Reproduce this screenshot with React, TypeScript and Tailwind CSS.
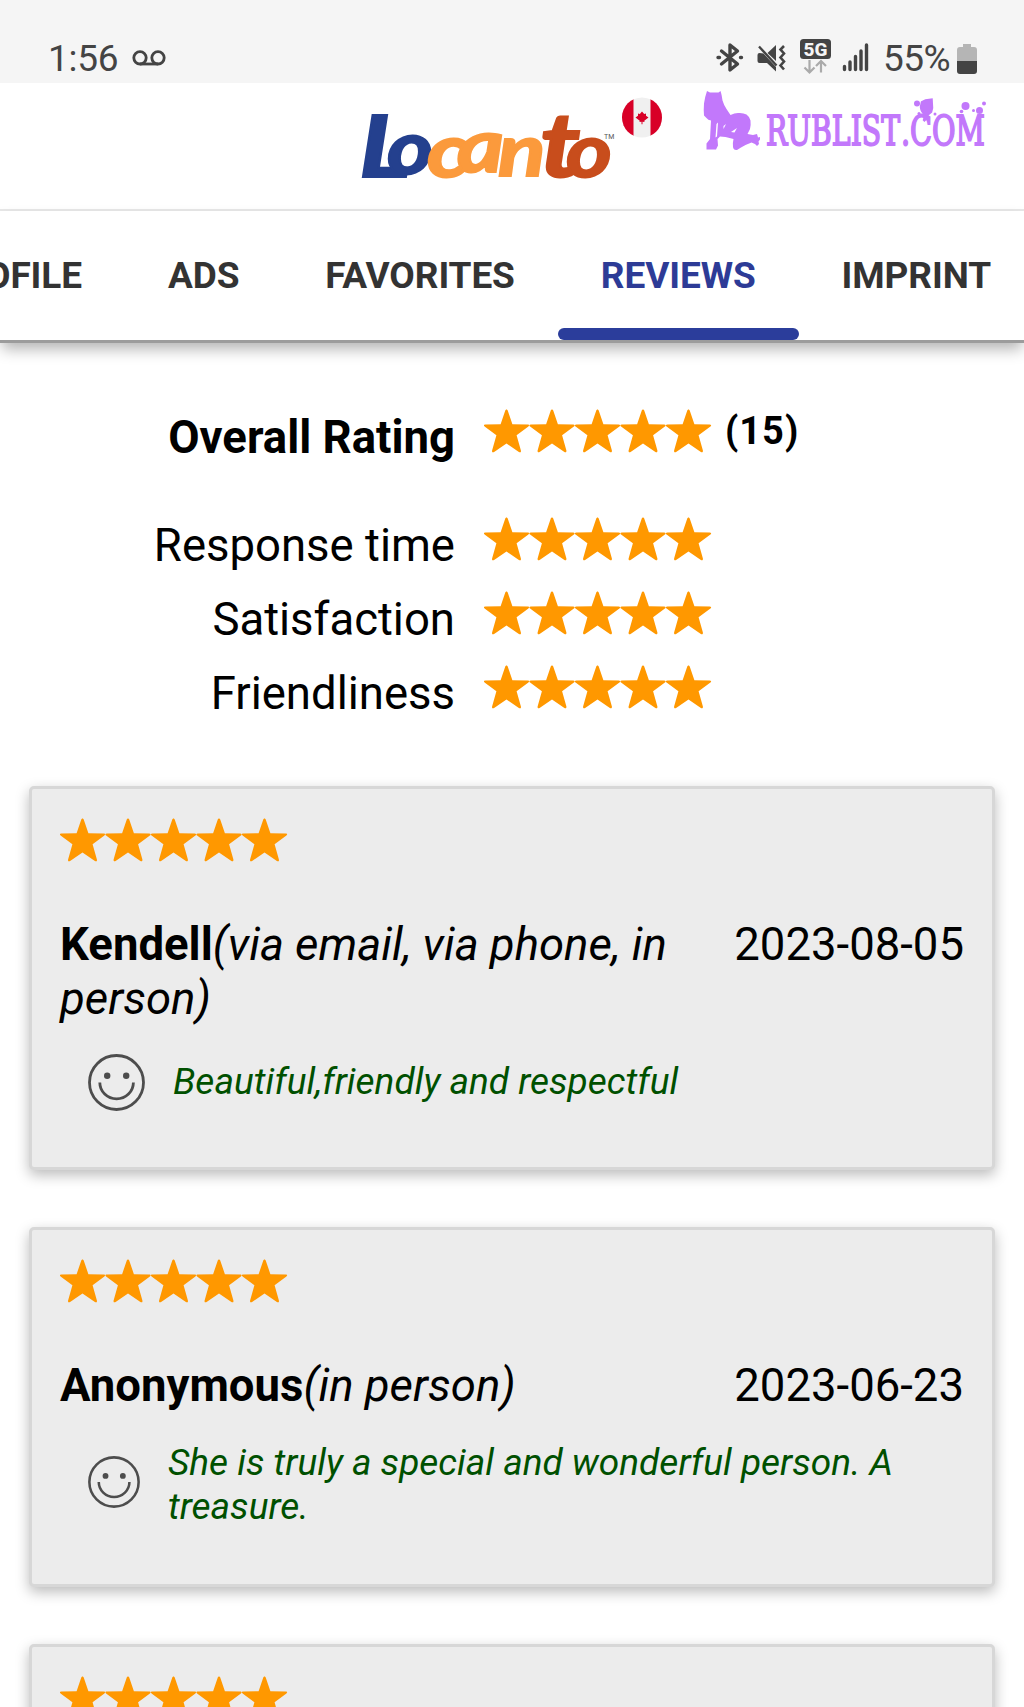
import React from "react";

const STAR = "M22.5 0.6 C23.1 0.6 23.6 1.2 23.9 2 L28.4 15.2 L43.6 15.4 C45.4 15.4 45.6 16.6 44.4 17.5 L32.6 26.3 L36.9 41.6 C37.2 43.2 36.2 43.8 34.9 43 L22.5 34.6 L10.1 43 C8.8 43.8 7.8 43.2 8.1 41.6 L12.4 26.3 L0.6 17.5 C-0.6 16.6 -0.4 15.4 1.4 15.4 L16.6 15.2 L21.1 2 C21.4 1.2 21.9 0.6 22.5 0.6 Z";

function Stars() {
  return (
    <svg className="block h-11 w-[228px] shrink-0" viewBox="0 0 228 44" fill="#ff9800">
      {[0, 1, 2, 3, 4].map((i) => (
        <path key={i} d={STAR} transform={`translate(${i * 45.5} 0)`} />
      ))}
    </svg>
  );
}

function Smiley({ className }: { className: string }) {
  return (
    <svg className={className} viewBox="0 0 57 57" fill="none" stroke="#4d4d4d" strokeWidth="2.8">
      <circle cx="28.5" cy="28.5" r="27" />
      <path d="M11.8 28.5a16.8 16.4 0 0 0 33.6 0" />
      <circle cx="19.2" cy="21.8" r="3.2" fill="#4d4d4d" stroke="none" />
      <circle cx="38.2" cy="21.8" r="3.2" fill="#4d4d4d" stroke="none" />
    </svg>
  );
}

function StatusBar() {
  return (
    <div className="flex h-[83px] items-end justify-between bg-[#f5f5f5] pl-[48px] pr-[47px] text-[#444]">
      <div className="flex h-[51px] items-center">
        <span className="pt-[2px] text-[37px] leading-[52px] tracking-[-0.3px]">1:56</span>
        <svg className="ml-[14px] h-[16px] w-[34px]" viewBox="0 0 34 16" fill="none" stroke="#444" strokeWidth="2.8">
          <circle cx="8" cy="7.8" r="6.2" />
          <circle cx="26" cy="7.8" r="6.2" />
          <path d="M8 14h18" />
        </svg>
      </div>
      <div className="flex h-[50px] items-center">
        <svg className="h-[38px] w-[156px]" viewBox="0 0 156 38" fill="none">
          <g stroke="#444" strokeWidth="3.400" strokeLinecap="round" strokeLinejoin="round">
            <path d="M5.500 12l16 13-7.500 6V6l7.500 6-16 13" />
            <path d="M2 18.500h1.500M24.500 18.500h1" />
          </g>
          <path d="M41.500 16q0-2 2-2l4 .5L60 28v4.500l-9-8.500h-7.500q-2 0-2-2zM51.500 14l8.500-8v16z" fill="#444" />
          <path d="M43 7.500l17.500 19" stroke="#444" strokeWidth="2.4" />
          <path d="M68 7l-3.500 3.500 3.500 4-3.500 4 3.500 4-3.500 4 3.500 4" stroke="#444" strokeWidth="2.6" />
          <rect x="84" y="0" width="31" height="20" rx="3.5" fill="#444" />
          <text x="99.5" y="16.700" textAnchor="middle" fill="#f5f5f5" fontSize="19" fontWeight="800" fontFamily="Roboto" textLength="24">5G</text>
          <g stroke="#aaa" strokeWidth="2.2">
            <path d="M93.5 21v12M88.5 28.500l5 5 5-5" />
            <path d="M105 33.500v-12M100 27l5-5 5 5" />
          </g>
          <g stroke="#444" strokeWidth="3.4" strokeLinecap="round">
            <path d="M128.500 27.500v3M134 23v7.500M139.500 17.500v13M145 12v18.500M150.500 6v24.500" />
          </g>
        </svg>
        <span className="ml-[11px] pt-[2px] text-[37px] leading-[50px] tracking-[-0.6px]">55%</span>
        <svg className="ml-[7px] mt-[2px] h-[30px] w-[20px]" viewBox="0 0 20 30">
          <path d="M6 0h8v3h3a3 3 0 0 1 3 3v11H0V6a3 3 0 0 1 3-3h3z" fill="#b5b5b5" />
          <path d="M0 17h20v10a3 3 0 0 1-3 3H3a3 3 0 0 1-3-3z" fill="#444" />
        </svg>
      </div>
    </div>
  );
}

function LocantoLogo() {
  return (
    <svg className="ml-[350px] block h-[126px] w-[320px]" viewBox="350 83 320 126" fontFamily="Lato" fontWeight="700" fontStyle="italic">
      <g strokeWidth="2">
        <g fill="#24408e" stroke="#24408e">
          <text transform="translate(359 177) scale(1.26 1)" fontSize="86">L</text>
          <text transform="translate(387 174) scale(1.17 1)" fontSize="75">o</text>
        </g>
        <g fill="#fb9a3c" stroke="#fb9a3c">
          <text transform="translate(427 177) scale(1.22 1)" fontSize="75">c</text>
          <text transform="translate(457 172) scale(1.2 1)" fontSize="75">a</text>
          <text transform="translate(498 176) scale(1.2 1)" fontSize="73">n</text>
        </g>
        <g fill="#c84d1c" stroke="#c84d1c">
          <text transform="translate(540 177) scale(1.22 1)" fontSize="90">t</text>
          <text transform="translate(566 177) scale(1.17 1)" fontSize="75">o</text>
        </g>
      </g>
      <text x="604" y="139" fontSize="7" fontWeight="400" fontStyle="normal" fontFamily="Roboto" fill="#555">TM</text>
      <clipPath id="flag"><circle cx="642" cy="117.500" r="20" /></clipPath>
      <g clipPath="url(#flag)">
        <rect x="622" y="97" width="40" height="41" fill="#f0f0f0" />
        <rect x="622" y="97" width="11.500" height="41" fill="#d80027" />
        <rect x="650.500" y="97" width="12" height="41" fill="#d80027" />
      </g>
      <path d="M642 111.500l2.200 2.600 1.800-.6v2.300l2.500 1.700-4.200 3.200.2 1.300-2-.2v2.500h-1v-2.500l-2 .2.200-1.300-4.200-3.200 2.500-1.700v-2.300l1.800.6z" fill="#d80027" />
    </svg>
  );
}

function Watermark() {
  return (
    <svg className="absolute left-[700px] top-[6px] h-[64px] w-[290px]" viewBox="700 89 290 64" fill="#c278fb">
      <path d="M707 91l3 1.500h8.500l2-1.500c1 3 1.500 6 2 9.500q1.500 5 4 8.500l4 6q4-2 7.500-2 5-.5 8.500 1.500 3.500 2.500 4 6 .5 4-.5 8.500l-2.500 5 5.500 1 4-1 1 3.500 2-.5v2.500l-1.500 2 .5 2.500-2 2-2-2-3.500-1.500-6 2.500-4.500 2.500-4 2.500q-3.500.5-4-3-.5-4 .5-8l-8-2-5.500-.5-2.500 2.500.5 6.500-2 4h-9.500v-6l3.500-4.500 1-18.500q-3-.5-4.500-2.500l-2.500-2.500q-.5-6 0-12 1-7 3-12.500z" />
      <path d="M716.500 124l1.500-1.500-1 14-1.500 1zM723.500 126l2.500-2-2.500 5zM731 132l6-4-2.500 4.500z" fill="#fff" />
      <g stroke="#c278fb" strokeWidth="1.9" fontFamily="DejaVu Serif" fontSize="41.500">
        <text x="766" y="145" textLength="134" lengthAdjust="spacingAndGlyphs">RUBLIST</text>
        <text x="901" y="145" textLength="84" lengthAdjust="spacingAndGlyphs">.COM</text>
      </g>
      <circle cx="917" cy="103.500" r="3" />
      <path d="M921.500 102l4-2 6.500-1 .5 9-1 4-3.500 3q-1 4-3.500 6l-1-1 1.500-5q-4-3-4.500-8z" stroke="#c278fb" strokeWidth="1.5" />
      <circle cx="919" cy="113.500" r="1.500" />
      <circle cx="935" cy="114" r="1.500" />
      <circle cx="965.500" cy="106" r="4" />
      <circle cx="961.500" cy="111.500" r="1.800" />
      <circle cx="973.500" cy="110.500" r="1.500" />
      <circle cx="979.500" cy="110.500" r="3.500" />
      <circle cx="984" cy="103.500" r="2" />
    </svg>
  );
}

function Tabs() {
  const tab = "shrink-0 px-[43px]";
  return (
    <nav className="relative flex h-[132px] justify-end border-b-[3px] border-[#9c9c9c] bg-white text-[37px] font-bold tracking-[-0.1px] text-[#333] shadow-[0_8px_14px_-2px_rgba(0,0,0,0.3)]">
      <div className="-mr-[10px] flex pt-[44px] leading-[42px]">
        <span className={tab}>PROFILE</span>
        <span className={tab}>ADS</span>
        <span className={tab}>FAVORITES</span>
        <span className="relative shrink-0 px-[43px] text-[#2d3b96]">
          REVIEWS
          <span className="absolute inset-x-0 bottom-0 h-[12px] rounded-full bg-[#2b3d9b]" />
        </span>
        <span className={tab}>IMPRINT</span>
      </div>
    </nav>
  );
}

function RatingRow({ label }: { label: string }) {
  return (
    <div className="flex h-[74px] items-start">
      <span className="w-[455px] pt-[2px] text-right leading-[54px]">{label}</span>
      <div className="ml-[29px]"><Stars /></div>
    </div>
  );
}

function Card({ children }: { children?: React.ReactNode }) {
  return (
    <article className="rounded-[5px] border-[3px] border-[#d7d7d7] bg-[#ececec] px-[28px] pt-[29px] shadow-[0_5px_14px_rgba(0,0,0,0.27)]">
      <Stars />
      {children}
    </article>
  );
}

export default function App() {
  return (
    <div className="h-[1707px] w-[1024px] overflow-hidden bg-white font-['Roboto',sans-serif] text-black">
      <StatusBar />
      <header className="relative h-[128px] border-b-[2px] border-[#e8e8e8]">
        <LocantoLogo />
        <Watermark />
      </header>
      <Tabs />
      <section className="pt-[66px] text-[45.5px]">
        <div className="flex h-[108px] items-start">
          <span className="w-[455px] pt-[2px] text-right font-bold leading-[54px]">Overall Rating</span>
          <div className="ml-[29px]"><Stars /></div>
          <span className="ml-[13px] text-[38px] font-bold leading-[44px] tracking-[1px]">(15)</span>
        </div>
        <RatingRow label="Response time" />
        <RatingRow label="Satisfaction" />
        <RatingRow label="Friendliness" />
      </section>
      <section className="mt-[47px] flex flex-col gap-[57px] px-[29px] text-[45.5px]">
        <Card>
          <div className="mt-[56px] flex justify-between leading-[54px]">
            <p className="w-[640px]"><b>Kendell</b><i>(via email, via phone, in person)</i></p>
            <span>2023-08-05</span>
          </div>
          <div className="flex h-[141px] pl-[28px] pt-[28px]">
            <Smiley className="h-[57px] w-[57px] shrink-0" />
            <p className="ml-[28px] pt-[6px] text-[37px] italic leading-[44px] text-[#005000]">Beautiful,friendly and respectful</p>
          </div>
        </Card>
        <Card>
          <div className="mt-[56px] flex justify-between leading-[54px]">
            <p><b>Anonymous</b><i>(in person)</i></p>
            <span>2023-06-23</span>
          </div>
          <div className="flex h-[171px] pl-[28px] pt-[28px]">
            <Smiley className="mt-[15px] h-[52px] w-[52px] shrink-0" />
            <p className="ml-[28px] w-[760px] text-[37px] italic leading-[43.600px] text-[#005000]">She is truly a special and wonderful person. A treasure.</p>
          </div>
        </Card>
        <Card />
      </section>
    </div>
  );
}
